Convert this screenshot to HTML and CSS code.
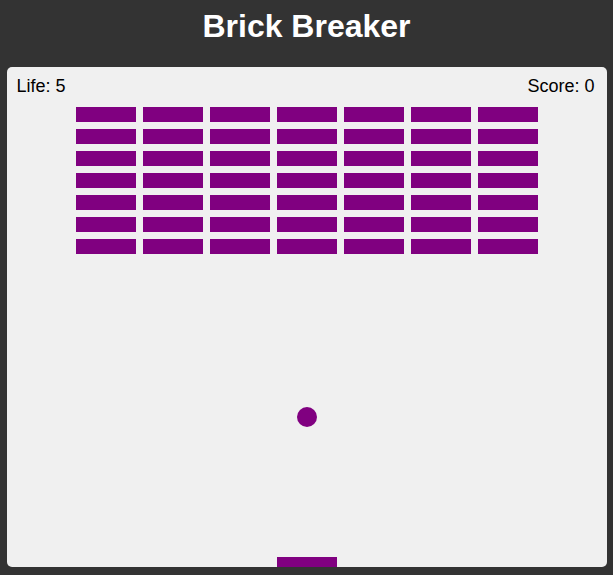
FILE: index.html
```html
<!DOCTYPE html>
<html lang="en">
<head>
<meta charset="utf-8">
<title>Brick Breaker</title>
<link rel="stylesheet" href="styles.css">
</head>
<body>
<h1 class="title">Brick Breaker</h1>
<div class="board">
  <div class="hud">
    <span class="life">Life: 5</span>
    <span class="score">Score: 0</span>
  </div>
  <div class="bricks">
    <div class="brick"></div><div class="brick"></div><div class="brick"></div><div class="brick"></div><div class="brick"></div><div class="brick"></div><div class="brick"></div>
    <div class="brick"></div><div class="brick"></div><div class="brick"></div><div class="brick"></div><div class="brick"></div><div class="brick"></div><div class="brick"></div>
    <div class="brick"></div><div class="brick"></div><div class="brick"></div><div class="brick"></div><div class="brick"></div><div class="brick"></div><div class="brick"></div>
    <div class="brick"></div><div class="brick"></div><div class="brick"></div><div class="brick"></div><div class="brick"></div><div class="brick"></div><div class="brick"></div>
    <div class="brick"></div><div class="brick"></div><div class="brick"></div><div class="brick"></div><div class="brick"></div><div class="brick"></div><div class="brick"></div>
    <div class="brick"></div><div class="brick"></div><div class="brick"></div><div class="brick"></div><div class="brick"></div><div class="brick"></div><div class="brick"></div>
    <div class="brick"></div><div class="brick"></div><div class="brick"></div><div class="brick"></div><div class="brick"></div><div class="brick"></div><div class="brick"></div>
  </div>
  <div class="ball"></div>
  <div class="paddle"></div>
</div>
</body>
</html>
```
FILE: styles.css
```css
html, body {
  margin: 0;
  padding: 0;
  background: #333333;
  font-family: "Liberation Sans", Arial, sans-serif;
}

.title {
  margin: 0;
  padding-top: 8px;
  font-size: 32px;
  line-height: 37px;
  font-weight: bold;
  color: #ffffff;
  text-align: center;
}

.board {
  position: relative;
  width: 600px;
  height: 500px;
  margin: 22px auto 0;
  background: #f0f0f0;
  border-radius: 5px;
  overflow: hidden;
}

.hud {
  display: flex;
  justify-content: space-between;
  padding: 9px 12px 0 10px;
  font-size: 18px;
  line-height: 20px;
  color: #000000;
}

.bricks {
  display: grid;
  grid-template-columns: repeat(7, 60px);
  grid-auto-rows: 15px;
  column-gap: 7px;
  row-gap: 7px;
  justify-content: center;
  margin-top: 11px;
}

.brick {
  background: #800080;
}

.ball {
  position: absolute;
  left: 290px;
  top: 340px;
  width: 20px;
  height: 20px;
  border-radius: 50%;
  background: #800080;
}

.paddle {
  position: absolute;
  left: 270px;
  bottom: 0;
  width: 60px;
  height: 10px;
  background: #800080;
}
```
